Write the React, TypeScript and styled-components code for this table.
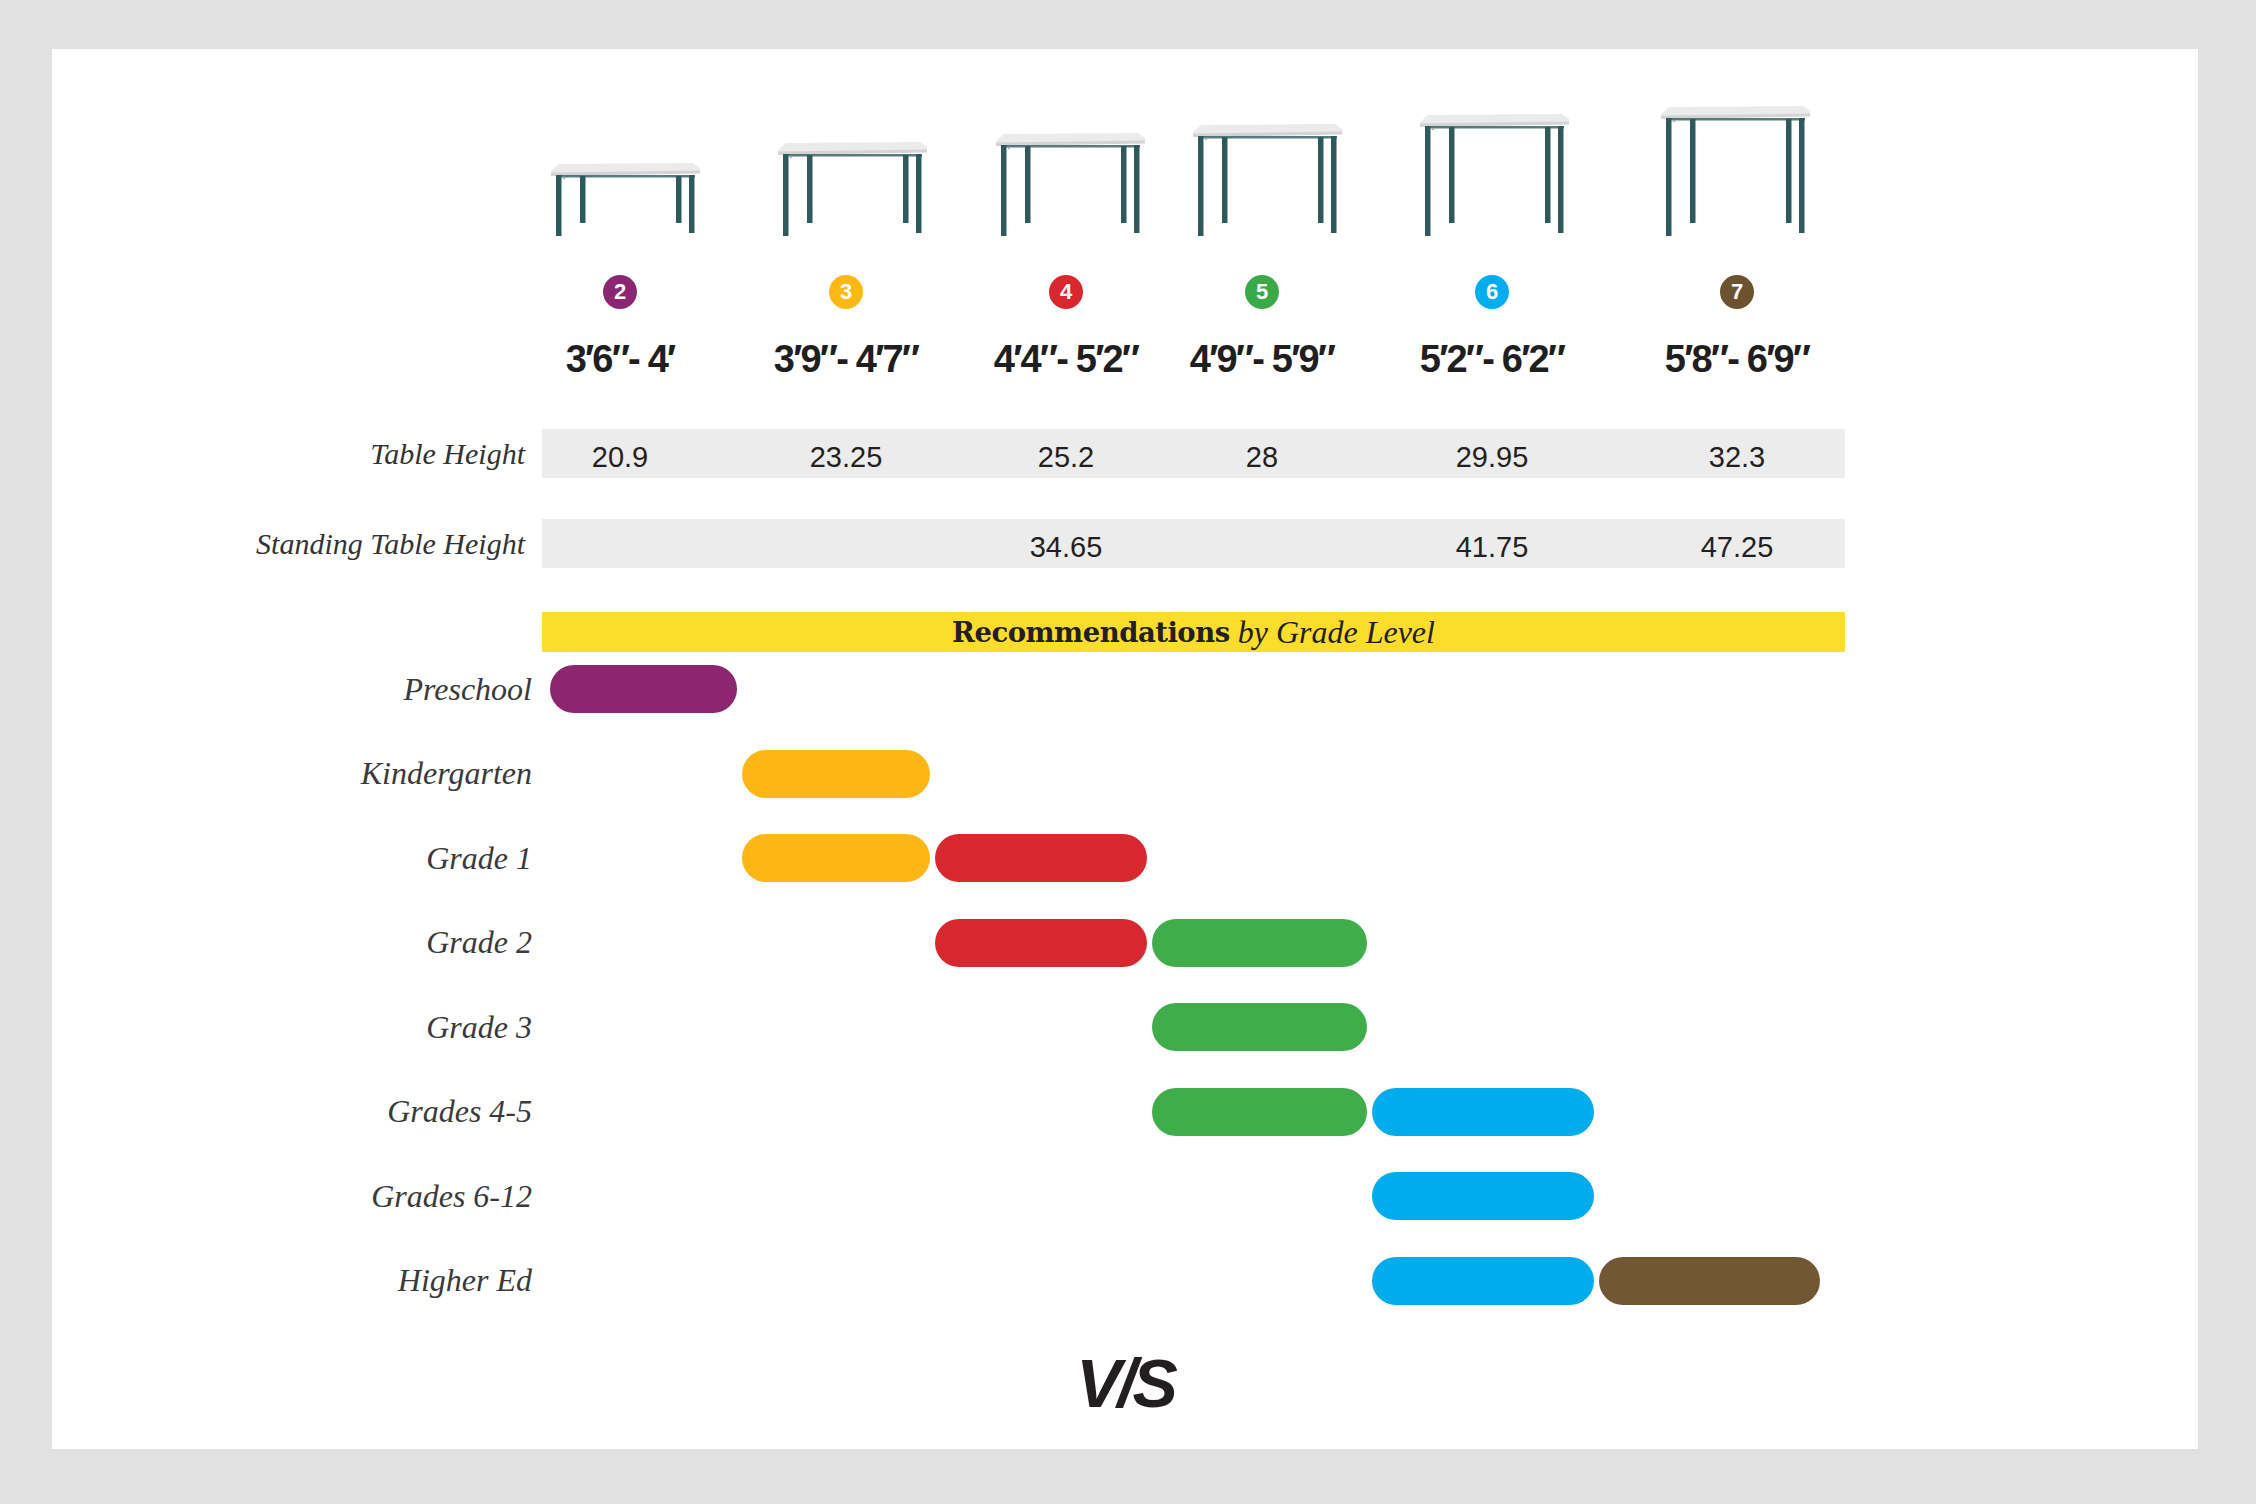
import React from 'react';
import styled, { createGlobalStyle } from 'styled-components';

const GlobalStyle = createGlobalStyle`
  html, body {
    margin: 0;
    padding: 0;
    background: #e1e1e1;
  }
  body {
    font-family: 'Liberation Sans', Arial, sans-serif;
    color: #231f20;
  }
`;

const COLS = '156px 296px 144px 248px 212px 278px';
const BAR_COLS = '187px 188px 212px 215px 222px 221px';

const Page = styled.div`
  width: 2256px;
  height: 1504px;
  box-sizing: border-box;
  padding: 49px 58px 55px 52px;
`;

const Card = styled.main`
  background: #fff;
  height: 1400px;
  box-sizing: border-box;
  padding-top: 57px;
  display: flex;
  flex-direction: column;
`;

const HeaderRow = styled.section`
  display: grid;
  grid-template-columns: 490px ${COLS};
`;

const SizeColumn = styled.div`
  display: flex;
  flex-direction: column;
  align-items: center;
`;

const TableBox = styled.div<{ $shift: number }>`
  height: 130px;
  display: flex;
  align-items: flex-end;
  margin-left: ${(p) => p.$shift * 2}px;
`;

const Badge = styled.div<{ $color: string }>`
  margin-top: 39px;
  width: 34px;
  height: 34px;
  border-radius: 50%;
  background: ${(p) => p.$color};
  color: #fff;
  font-weight: 700;
  font-size: 22px;
  display: flex;
  align-items: center;
  justify-content: center;
`;

const HeightLabel = styled.div`
  margin-top: 31px;
  font-size: 38px;
  line-height: 38px;
  font-weight: 700;
  letter-spacing: -1.8px;
  white-space: nowrap;
  color: #1f1f1f;
`;

const DataRow = styled.div<{ $gap: number }>`
  display: grid;
  grid-template-columns: 473px 1303px;
  column-gap: 17px;
  margin-top: ${(p) => p.$gap}px;
`;

const RowLabel = styled.div`
  align-self: center;
  text-align: right;
  font-family: 'Liberation Serif', 'Times New Roman', serif;
  font-style: italic;
  font-size: 30px;
  color: #333;
  white-space: nowrap;
`;

const Band = styled.div`
  height: 49px;
  box-sizing: border-box;
  padding-top: 7px;
  background: #ececec;
  display: grid;
  grid-template-columns: ${COLS};
  align-items: center;
`;

const Value = styled.div`
  text-align: center;
  font-size: 29px;
  color: #231f20;
`;

const Banner = styled.div`
  grid-column: 2;
  height: 40px;
  background: #fddd2c;
  display: flex;
  align-items: center;
  justify-content: center;
  color: #231f20;
  white-space: nowrap;
`;

const BannerStrong = styled.span`
  font-family: 'DejaVu Serif', 'Liberation Serif', serif;
  font-weight: 700;
  font-size: 27.5px;
  letter-spacing: -0.5px;
`;

const BannerItalic = styled.span`
  font-family: 'Liberation Serif', 'Times New Roman', serif;
  font-style: italic;
  font-size: 32px;
  margin-left: 8px;
`;

const GradeList = styled.section`
  display: flex;
  flex-direction: column;
  gap: 36.5px;
  margin-top: 13px;
`;

const GradeRow = styled.div`
  display: grid;
  grid-template-columns: 493px ${BAR_COLS};
  column-gap: 5px;
  height: 48px;
`;

const GradeLabel = styled.div`
  grid-column: 1;
  align-self: center;
  text-align: right;
  padding-right: 13px;
  font-family: 'Liberation Serif', 'Times New Roman', serif;
  font-style: italic;
  font-size: 32px;
  color: #3a3a3a;
  white-space: nowrap;
`;

const Bar = styled.div<{ $col: number; $color: string }>`
  grid-column: ${(p) => p.$col + 2};
  grid-row: 1;
  height: 48px;
  border-radius: 24px;
  background: ${(p) => p.$color};
`;

const Logo = styled.div`
  margin-top: 44px;
  text-align: center;
  font-family: 'Liberation Sans', Arial, sans-serif;
  font-weight: 700;
  font-style: italic;
  font-size: 68px;
  line-height: 68px;
  letter-spacing: -4px;
  color: #231f20;
`;

const LEG = '#2e5a5e';

const TableIcon: React.FC<{ h: number }> = ({ h }) => (
  <svg width="150" height={h} viewBox={`0 0 150 ${h}`}>
    <path d="M1 8 L9 1 L143 0 L150 5 L150 9 L1 12 Z" fill="#ebebeb" />
    <path d="M1 9.5 L150 7.5 L150 10.5 L1 13 Z" fill="#d4d4d4" />
    <rect x="6" y="12" width="139" height="2.5" fill={LEG} opacity="0.8" />
    <rect x="30" y="13" width="5.5" height={h - 26} fill={LEG} />
    <rect x="126" y="13" width="5.5" height={h - 26} fill={LEG} />
    <rect x="6" y="12" width="5.5" height={h - 12} fill={LEG} />
    <rect x="139" y="12" width="5.5" height={h - 15} fill={LEG} />
    <circle cx="14" cy="15" r="1.3" fill="#9fb5b7" />
  </svg>
);

const sizes = [
  { n: 2, color: '#8b2673', range: '3′6″- 4′', h: 73, shift: 5, table: '20.9', standing: '' },
  { n: 3, color: '#fdb913', range: '3′9″- 4′7″', h: 94, shift: 6, table: '23.25', standing: '' },
  { n: 4, color: '#d9272e', range: '4′4″- 5′2″', h: 103, shift: 4, table: '25.2', standing: '34.65' },
  { n: 5, color: '#3aaa49', range: '4′9″- 5′9″', h: 112, shift: 5, table: '28', standing: '' },
  { n: 6, color: '#00aeef', range: '5′2″- 6′2″', h: 122, shift: 2, table: '29.95', standing: '41.75' },
  { n: 7, color: '#6d5230', range: '5′8″- 6′9″', h: 130, shift: -2, table: '32.3', standing: '47.25' },
];

const BAR_COLORS = ['#8d2670', '#fcb716', '#d7282f', '#3fae4a', '#00acec', '#715734'];

const grades: { label: string; cols: number[] }[] = [
  { label: 'Preschool', cols: [0] },
  { label: 'Kindergarten', cols: [1] },
  { label: 'Grade 1', cols: [1, 2] },
  { label: 'Grade 2', cols: [2, 3] },
  { label: 'Grade 3', cols: [3] },
  { label: 'Grades 4-5', cols: [3, 4] },
  { label: 'Grades 6-12', cols: [4] },
  { label: 'Higher Ed', cols: [4, 5] },
];

const App: React.FC = () => {
  return (
    <Page>
      <GlobalStyle />
      <Card>
        <HeaderRow>
          <div />
          {sizes.map((s) => (
            <SizeColumn key={s.n}>
              <TableBox $shift={s.shift}>
                <TableIcon h={s.h} />
              </TableBox>
              <Badge $color={s.color}>{s.n}</Badge>
              <HeightLabel>{s.range}</HeightLabel>
            </SizeColumn>
          ))}
        </HeaderRow>

        <DataRow $gap={51}>
          <RowLabel>Table Height</RowLabel>
          <Band>
            {sizes.map((s) => (
              <Value key={s.n}>{s.table}</Value>
            ))}
          </Band>
        </DataRow>

        <DataRow $gap={41}>
          <RowLabel>Standing Table Height</RowLabel>
          <Band>
            {sizes.map((s) => (
              <Value key={s.n}>{s.standing}</Value>
            ))}
          </Band>
        </DataRow>

        <DataRow $gap={44}>
          <Banner>
            <BannerStrong>Recommendations</BannerStrong>
            <BannerItalic>by Grade Level</BannerItalic>
          </Banner>
        </DataRow>

        <GradeList>
          {grades.map((g) => (
            <GradeRow key={g.label}>
              <GradeLabel>{g.label}</GradeLabel>
              {g.cols.map((c) => (
                <Bar key={c} $col={c} $color={BAR_COLORS[c]} />
              ))}
            </GradeRow>
          ))}
        </GradeList>

        <Logo>V/S</Logo>
      </Card>
    </Page>
  );
};

export default App;
